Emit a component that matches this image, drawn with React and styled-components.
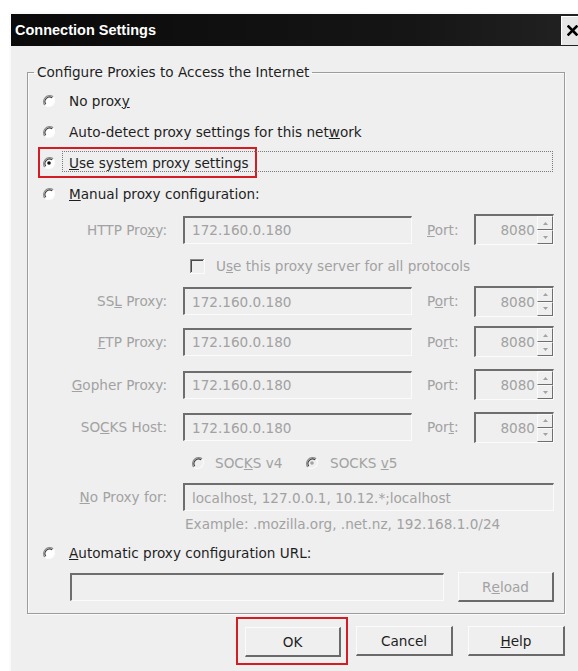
import React from 'react';
import styled, { createGlobalStyle } from 'styled-components';

const GlobalStyle = createGlobalStyle`
  html, body {
    margin: 0;
    padding: 0;
    background: #ffffff;
    overflow: hidden;
  }
  body {
    font-family: "DejaVu Sans", "Liberation Sans", sans-serif;
    font-size: 13.6px;
  }
`;

const Window = styled.div`
  margin: 12px 0 0 9px;
  width: 573px;
  height: 680px;
  background: #efefef;
  border-left: 2px solid #fafafa;
  border-top: 2px solid #fafafa;
  box-sizing: border-box;
`;

const TitleBar = styled.div`
  height: 32px;
  display: flex;
  align-items: center;
  justify-content: space-between;
  background: linear-gradient(to right, #0a0a0a, #151515 70%, #222);
  padding-left: 4px;
`;

const Title = styled.span`
  color: #ffffff;
  font-family: "Liberation Sans", Arial, sans-serif;
  font-weight: bold;
  font-size: 14.5px;
`;

const CloseButton = styled.div`
  width: 20px;
  height: 28px;
  background: #e6e6e6;
  border-left: 1px solid #ffffff;
  border-top: 1px solid #ffffff;
  display: flex;
  align-items: center;
  justify-content: center;
`;

const Body = styled.div`
  padding: 18px 0 0 16px;
`;

const Group = styled.fieldset`
  width: 538px;
  box-sizing: border-box;
  margin: 0;
  padding: 5px 0 11px 14px;
  border: 1px solid #9c9c9c;
  box-shadow: inset 1px 1px 0 #fafafa, 1px 1px 0 #fafafa;
`;

const Legend = styled.legend`
  margin-left: -8px;
  padding: 0 3px;
  line-height: 16px;
  color: #1e1e1e;
`;

const RadioRow = styled.div`
  height: ${(p) => p.h || 31}px;
  display: flex;
  align-items: center;
  margin-top: ${(p) => p.mt || 0}px;
`;

const Marked = styled.div`
  display: flex;
  align-items: center;
  height: 100%;
  box-sizing: border-box;
  border: 2px solid #d41c24;
  margin-left: -4px;
  padding-left: 2px;
  padding-right: 6px;
  position: relative;
`;

const Label = styled.span`
  color: ${(p) => (p.off ? '#a2a2a2' : '#1e1e1e')};
  margin-left: ${(p) => p.ml ?? 13}px;
  white-space: nowrap;
`;

const Focus = styled.span`
  position: absolute;
  left: 22px;
  top: 2px;
  width: 491px;
  height: 21px;
  box-sizing: border-box;
  border: 1px dotted #7a7a7a;
`;

const ProxyGrid = styled.div`
  display: grid;
  grid-template-columns: 125px 229px 30px 80px;
  grid-template-rows: 41px 32px 38px 43px 43px 42px 30px 38px 16px;
  column-gap: 16px;
  align-items: center;
`;

const FieldName = styled.span`
  text-align: right;
  color: #a2a2a2;
  white-space: nowrap;
`;

const PortName = styled.span`
  color: #a2a2a2;
  margin-left: -1px;
`;

const Field = styled.div`
  height: 28px;
  box-sizing: border-box;
  border-top: 2px solid #6e6e6e;
  border-left: 2px solid #6e6e6e;
  border-bottom: 1px solid #fbfbfb;
  border-right: 1px solid #fbfbfb;
  background: #efefef;
  color: #a2a2a2;
  display: flex;
  align-items: center;
  padding-left: 7px;
  white-space: nowrap;
  overflow: hidden;
  grid-column: ${(p) => p.span || 'auto'};
  width: ${(p) => (p.w ? `${p.w}px` : 'auto')};
`;

const Spinner = styled.div`
  height: 31px;
  box-sizing: border-box;
  border-top: 2px solid #6e6e6e;
  border-left: 2px solid #6e6e6e;
  border-bottom: 1px solid #fbfbfb;
  border-right: 1px solid #fbfbfb;
  display: flex;
  align-items: stretch;
  color: #a2a2a2;
`;

const SpinValue = styled.span`
  flex: 1;
  display: flex;
  align-items: center;
  justify-content: flex-end;
  padding-right: 2px;
`;

const SpinButtons = styled.div`
  width: 16px;
  display: flex;
  flex-direction: column;
`;

const SpinButton = styled.div`
  flex: 1;
  box-sizing: border-box;
  border-top: 1px solid #fafafa;
  border-left: 1px solid #fafafa;
  border-right: 1px solid #6e6e6e;
  border-bottom: 1px solid #6e6e6e;
  display: flex;
  align-items: center;
  justify-content: center;
`;

const CheckRow = styled.div`
  grid-column: 2 / 5;
  display: flex;
  align-items: center;
  padding-left: 7px;
`;

const SocksRow = styled.div`
  grid-column: 2 / 5;
  display: flex;
  align-items: center;
  padding-left: 8px;
`;

const SocksOption = styled.div`
  display: flex;
  align-items: center;
  width: 114px;
`;

const Example = styled.span`
  grid-column: 2 / 5;
  color: #a2a2a2;
  padding-left: 2px;
  white-space: nowrap;
`;

const UrlRow = styled.div`
  display: flex;
  align-items: center;
  gap: 14px;
  margin-top: 4px;
  padding-left: 28px;
`;

const Button = styled.div`
  width: ${(p) => p.w || 96}px;
  height: 30px;
  box-sizing: border-box;
  background: #efefef;
  border-top: 1px solid #fbfbfb;
  border-left: 1px solid #fbfbfb;
  border-right: 2px solid #6a6a6a;
  border-bottom: 2px solid #6a6a6a;
  display: flex;
  align-items: center;
  justify-content: center;
  color: ${(p) => (p.off ? '#a2a2a2' : '#1e1e1e')};
`;

const ButtonBar = styled.div`
  width: 538px;
  display: flex;
  justify-content: flex-end;
  align-items: center;
  margin-top: 3px;
`;

const MarkedButton = styled.div`
  border: 2px solid #d41c24;
  padding: 8px 5px 6px 7px;
  margin-right: 8px;
`;

const Gap = styled.div`
  width: ${(p) => p.w}px;
`;

function Radio({ checked, off }) {
  return (
    <svg width="14" height="14" viewBox="0 0 14 14">
      <circle cx="7" cy="7" r="6" fill={off ? '#efefef' : '#ffffff'} />
      <path d="M11.2 2.8 A6 6 0 0 0 2.8 11.2" fill="none" stroke="#8a8a8a" strokeWidth="1.2" />
      <path d="M10.2 3.8 A4.6 4.6 0 0 0 3.8 10.2" fill="none" stroke="#3c3c3c" strokeWidth="1.1" />
      <path d="M2.8 11.2 A6 6 0 0 0 11.2 2.8" fill="none" stroke="#fbfbfb" strokeWidth="1.2" />
      {checked && <circle cx="7" cy="7" r="1.8" fill={off ? '#a2a2a2' : '#111'} />}
    </svg>
  );
}

function CheckBox() {
  return (
    <svg width="15" height="15" viewBox="0 0 15 15">
      <rect x="0" y="0" width="15" height="15" fill="#fbfbfb" />
      <rect x="0" y="0" width="14" height="14" fill="#8a8a8a" />
      <rect x="1" y="1" width="13" height="13" fill="#efefef" />
      <rect x="1" y="1" width="12" height="12" fill="#4a4a4a" />
      <rect x="2" y="2" width="11" height="11" fill="#efefef" />
    </svg>
  );
}

function Spin({ value }) {
  return (
    <Spinner>
      <SpinValue>{value}</SpinValue>
      <SpinButtons>
        <SpinButton>
          <svg width="5" height="3" viewBox="0 0 5 3"><path d="M2.5 0 L5 3 L0 3 Z" fill="#a2a2a2" /></svg>
        </SpinButton>
        <SpinButton>
          <svg width="5" height="3" viewBox="0 0 5 3"><path d="M0 0 L5 0 L2.5 3 Z" fill="#a2a2a2" /></svg>
        </SpinButton>
      </SpinButtons>
    </Spinner>
  );
}

const proxies = [
  { name: <>HTTP Pro<u>x</u>y:</>, port: <><u>P</u>ort:</> },
  null,
  { name: <>SS<u>L</u> Proxy:</>, port: <>P<u>o</u>rt:</> },
  { name: <><u>F</u>TP Proxy:</>, port: <>Po<u>r</u>t:</> },
  { name: <><u>G</u>opher Proxy:</>, port: <>Port:</> },
  { name: <>SO<u>C</u>KS Host:</>, port: <>Por<u>t</u>:</> },
];

export default function App() {
  return (
    <>
      <GlobalStyle />
      <Window>
        <TitleBar>
          <Title>Connection Settings</Title>
          <CloseButton>
            <svg width="11" height="11" viewBox="0 0 11 11">
              <path d="M1.5 1.5 L9.5 9.5 M9.5 1.5 L1.5 9.5" stroke="#000" strokeWidth="2.6" strokeLinecap="square" />
            </svg>
          </CloseButton>
        </TitleBar>
        <Body>
          <Group>
            <Legend>Configure Proxies to Access the Internet</Legend>
            <RadioRow>
              <Radio />
              <Label>No prox<u>y</u></Label>
            </RadioRow>
            <RadioRow>
              <Radio />
              <Label>Auto-detect proxy settings for this net<u>w</u>ork</Label>
            </RadioRow>
            <RadioRow>
              <Marked>
                <Radio checked />
                <Label><u>U</u>se system proxy settings</Label>
                <Focus />
              </Marked>
            </RadioRow>
            <RadioRow>
              <Radio />
              <Label><u>M</u>anual proxy configuration:</Label>
            </RadioRow>

            <ProxyGrid>
              {proxies.map((p, i) =>
                p ? (
                  <React.Fragment key={i}>
                    <FieldName>{p.name}</FieldName>
                    <Field>172.160.0.180</Field>
                    <PortName>{p.port}</PortName>
                    <Spin value="8080" />
                  </React.Fragment>
                ) : (
                  <React.Fragment key={i}>
                    <span />
                    <CheckRow>
                      <CheckBox />
                      <Label off ml={11}>U<u>s</u>e this proxy server for all protocols</Label>
                    </CheckRow>
                  </React.Fragment>
                )
              )}
              <span />
              <SocksRow>
                <SocksOption>
                  <Radio off />
                  <Label off ml={10}>SOC<u>K</u>S v4</Label>
                </SocksOption>
                <SocksOption>
                  <Radio off checked />
                  <Label off ml={11}>SOCKS <u>v</u>5</Label>
                </SocksOption>
              </SocksRow>
              <FieldName><u>N</u>o Proxy for:</FieldName>
              <Field span="2 / 5" w={371}>localhost, 127.0.0.1, 10.12.*;localhost</Field>
              <span />
              <Example>Example: .mozilla.org, .net.nz, 192.168.1.0/24</Example>
            </ProxyGrid>

            <RadioRow mt={6} h={30}>
              <Radio />
              <Label><u>A</u>utomatic proxy configuration URL:</Label>
            </RadioRow>
            <UrlRow>
              <Field w={374} />
              <Button off w={96}>R<u>e</u>load</Button>
            </UrlRow>
          </Group>
          <ButtonBar>
            <MarkedButton>
              <Button w={96}>OK</Button>
            </MarkedButton>
            <Button w={97}>Cancel</Button>
            <Gap w={15} />
            <Button w={97}><u>H</u>elp</Button>
          </ButtonBar>
        </Body>
      </Window>
    </>
  );
}
